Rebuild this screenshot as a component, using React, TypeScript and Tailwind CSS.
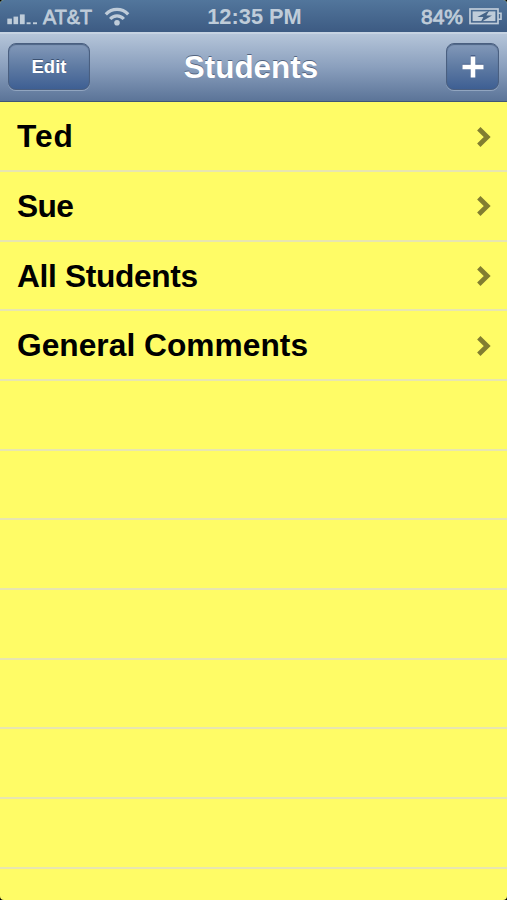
const students = [
  { name: "Ted", tracking: "tracking-[0.9px]" },
  { name: "Sue", tracking: "tracking-[-0.6px]" },
  { name: "All Students", tracking: "tracking-[-0.35px]" },
  { name: "General Comments", tracking: "tracking-[0.03px]" },
];
const ROW_COUNT = 12;

function SignalBars() {
  return (
    <svg width="31" height="12" viewBox="0 0 31 12" fill="#bfccd9">
      <rect x="0.3" y="5.6" width="4.6" height="5.6" />
      <rect x="6.5" y="3.6" width="4.6" height="7.6" />
      <rect x="12.9" y="1.4" width="4.8" height="9.8" />
      <rect x="19.6" y="9.3" width="4" height="1.9" />
      <rect x="26" y="9.3" width="4" height="1.9" />
    </svg>
  );
}

function WifiIcon() {
  return (
    <svg width="26" height="20" viewBox="0 0 26 20" fill="none" stroke="#bfccd9" strokeWidth="3.2">
      <path d="M1.8 7.4C8 0.8 18 0.8 24.2 7.4" />
      <path d="M6.2 12C10 7.8 16 7.8 19.8 12" />
      <circle cx="13" cy="15.7" r="2.8" fill="#bfccd9" stroke="none" />
    </svg>
  );
}

function BatteryIcon() {
  return (
    <svg width="34" height="17" viewBox="0 0 34 17">
      <rect x="1" y="1" width="28" height="14.5" fill="none" stroke="#bfccd9" strokeWidth="1.7" />
      <path d="M29 5.3h3v6h-3" fill="none" stroke="#bfccd9" strokeWidth="1.6" />
      <rect x="3.6" y="3.4" width="22.8" height="9.7" fill="#bfccd9" />
      <path d="M20.3 2.4L8.4 9h6l-2.7 5.2L23 7.5h-5.6z" fill="#456488" />
    </svg>
  );
}

function Chevron() {
  return (
    <svg width="14" height="20" viewBox="0 0 14 20" fill="none" stroke="#827e30" strokeWidth="4.8">
      <path d="M1.8 1.8L10.2 10L1.8 18.2" />
    </svg>
  );
}

function StatusBar() {
  return (
    <div className="grid h-[32px] grid-cols-[1fr_auto_1fr] items-center bg-linear-to-b from-[#52769c] to-[#3d5b83] text-[21.8px] leading-[32px] font-bold text-[#bfccd9]">
      <div className="flex items-center pl-[7px]">
        <div className="mt-[5px]">
          <SignalBars />
        </div>
        <span className="ml-[5px] w-[50px] origin-left scale-x-[0.94] pt-px text-[21px] font-normal whitespace-nowrap [-webkit-text-stroke:0.8px_#bfccd9]">
          AT&amp;T
        </span>
        <div className="mt-px ml-[11px]">
          <WifiIcon />
        </div>
      </div>
      <span className="pt-px pl-[2px]">12:35 PM</span>
      <div className="flex items-center justify-end gap-[6px] pr-[4px]">
        <span className="pt-px text-[21px] font-normal [-webkit-text-stroke:0.8px_#bfccd9]">84%</span>
        <BatteryIcon />
      </div>
    </div>
  );
}

function NavBar() {
  const button =
    "flex h-[47px] items-center justify-center rounded-[8px] border border-[#4a5f80] bg-linear-to-b from-[#8399b9] via-[#5f7ba3] to-[#3e5f93] text-white shadow-[0_1px_0_#91a5c0,inset_0_1px_1px_#4d6485]";

  return (
    <header className="flex h-[70px] items-center justify-between border-t-2 border-b border-t-[#c6d3e2] border-b-[#405777] bg-linear-to-b from-[#b5c5d9] via-[#8a9fbd] to-[#5b7498] px-[8px] pb-[2px]">
      <button className={`${button} w-[82px] pt-px text-[18.5px] font-bold [text-shadow:0_-1px_0_#3b5172]`}>
        Edit
      </button>
      <h1 className="ml-[-34px] pt-[2px] text-[31.4px] leading-none font-bold text-white [text-shadow:0_-1.5px_0_#53647f]">
        Students
      </h1>
      <button aria-label="Add" className={`${button} w-[53px]`}>
        <svg width="24" height="24" viewBox="0 0 24 24" strokeWidth="4.6">
          <path d="M13 0v20M2.5 11h21" stroke="#4a608a" />
          <path d="M13 1.4v21M2.5 12h21" stroke="#fff" />
        </svg>
      </button>
    </header>
  );
}

export default function App() {
  return (
    <div className="h-[900px] w-[507px] overflow-hidden bg-black font-['Liberation_Sans',Arial,sans-serif]">
      <div className="flex h-full flex-col overflow-hidden rounded-[4px] bg-[#fffc66]">
        <StatusBar />
        <NavBar />
        <ul className="min-h-0 flex-1 overflow-hidden pt-[0.5px]">
          {Array.from({ length: ROW_COUNT }, (_, i) => (
            <li
              key={i}
              className="flex h-[69.65px] items-center justify-between border-b-2 border-[#e8e6b0] pt-px pr-[16px] pl-[17px] text-[31.7px] leading-none font-bold text-black"
            >
              {students[i] && (
                <>
                  <span className={`pt-px ${students[i].tracking}`}>{students[i].name}</span>
                  <Chevron />
                </>
              )}
            </li>
          ))}
        </ul>
      </div>
    </div>
  );
}
